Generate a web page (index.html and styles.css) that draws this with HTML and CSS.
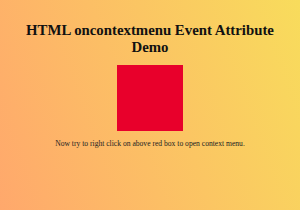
FILE: index.html
```html
<!DOCTYPE html>
<html lang="en">

<head>
    <meta charset="UTF-8">
    <meta name="viewport" content="width=device-width, initial-scale=1.0">
    <title>HTML oncontextmenu Event Attribute</title>
    <link rel="stylesheet" href="styles.css">
</head>

<body>
    <div class="container">
        <h1 class="title">HTML oncontextmenu Event Attribute Demo</h1>
        <div class="red-box" id="box"></div>
        <p class="hint">Now try to right click on above red box to open context menu.</p>
    </div>
</body>

</html>
```

FILE: styles.css
```css
* {
    box-sizing: border-box;
    margin: 0;
    padding: 0;
}

html,
body {
    width: 300px;
    height: 210px;
}

body {
    font-family: 'Liberation Serif', 'Times New Roman', serif;
    background: linear-gradient(70deg, #ffa86c, #f8dc5c);
    color: #111;
    overflow: hidden;
}

.container {
    display: flex;
    flex-direction: column;
    align-items: center;
    padding-top: 22px;
}

.title {
    width: 264px;
    font-size: 14.8px;
    font-weight: bold;
    line-height: 16.5px;
    text-align: center;
}

.red-box {
    width: 66px;
    height: 66px;
    margin-top: 10px;
    background-color: #e8002b;
}

.hint {
    margin-top: 8px;
    font-size: 7.6px;
    color: #222;
}
```
